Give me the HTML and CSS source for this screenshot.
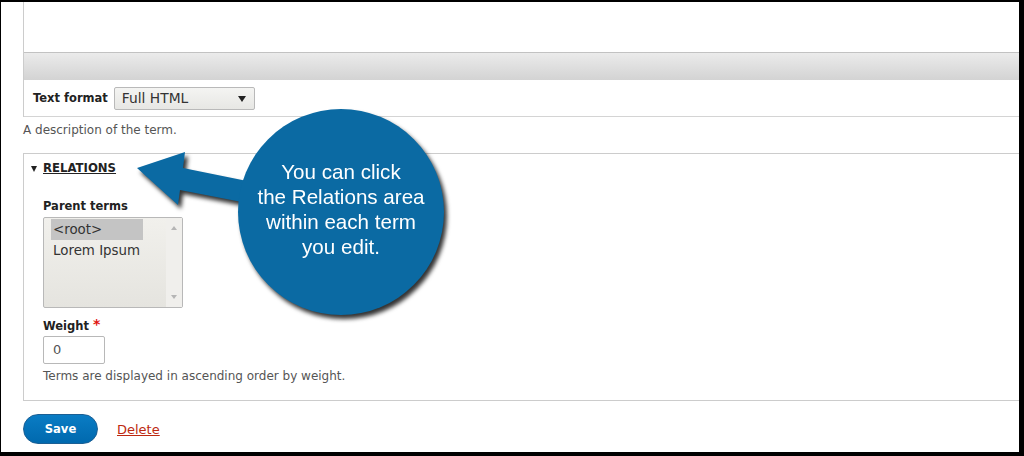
FILE: index.html
```html
<!DOCTYPE html>
<html lang="en">
<head>
    <meta charset="UTF-8">
    <title>Edit term</title>
    <link rel="stylesheet" href="styles.css">
</head>
<body>
    <div class="screen">
        <div class="editor">
            <div class="editor-body"></div>
            <div class="editor-toolbar"></div>
            <div class="format-row">
                <span class="label">Text format</span>
                <div class="select">Full HTML<span class="caret"></span></div>
            </div>
        </div>
        <p class="desc desc-term">A description of the term.</p>

        <div class="fieldset">
            <div class="legend"><span class="toggle"></span><a href="#">RELATIONS</a></div>
            <div class="fieldset-body">
                <div class="label label-parent">Parent terms</div>
                <div class="listbox">
                    <div class="options">
                        <div class="option selected">&lt;root&gt;</div>
                        <div class="option">Lorem Ipsum</div>
                    </div>
                    <div class="scrollbar">
                        <span class="arrow-up"></span>
                        <span class="arrow-down"></span>
                    </div>
                </div>
                <div class="label label-weight">Weight <span class="req">*</span></div>
                <div class="input">0</div>
                <p class="desc desc-weight">Terms are displayed in ascending order by weight.</p>
            </div>
        </div>

        <div class="actions">
            <a href="#" class="button">Save</a>
            <a href="#" class="delete">Delete</a>
        </div>

        <!-- callout overlay -->
        <div class="callout">
            <svg class="callout-arrow" width="130" height="70" viewBox="130 145 130 70">
                <polygon points="137,168 185,152 183,168 252,182 252,204 180,190 178,205"></polygon>
            </svg>
            <div class="callout-bubble">
                <span>You can click</span>
                <span>the Relations area</span>
                <span>within each term</span>
                <span>you edit.</span>
            </div>
        </div>
    </div>
</body>
</html>
```

FILE: styles.css
```css
* {
    box-sizing: border-box;
}
html, body {
    margin: 0;
    padding: 0;
}
body {
    background: #000;
    width: 1024px;
    height: 456px;
    overflow: hidden;
    font-family: 'DejaVu Sans', sans-serif;
    color: #333;
}
.screen {
    position: relative;
    margin: 2px 5px 0 1px;
    height: 450px;
    background: #fff;
    padding-left: 22px;
    overflow: hidden;
}
.editor {
    border-left: 1px solid #ccc;
}
.editor-body {
    height: 50px;
}
.editor-toolbar {
    height: 28px;
    border-top: 1px solid #c2c2c2;
    background: linear-gradient(to bottom, #ebebeb, #d3d3d3);
}
.format-row {
    height: 37px;
    border-bottom: 1px solid #d4d4d4;
    display: flex;
    align-items: center;
    padding-left: 9px;
}
.label {
    font-weight: bold;
    font-size: 11.5px;
    line-height: 16px;
    color: #222;
}
.format-row .label {
    margin-right: 6px;
}
.select {
    position: relative;
    width: 141px;
    height: 23px;
    margin-top: 1px;
    border: 1px solid #b9b9b9;
    border-radius: 2px;
    background: linear-gradient(to bottom, #f4f4f2, #e7e7e4);
    font-size: 13.8px;
    line-height: 21px;
    padding-left: 7px;
    color: #333;
}
.caret {
    position: absolute;
    right: 8px;
    top: 8px;
    border-top: 6px solid #222;
    border-left: 4px solid transparent;
    border-right: 4px solid transparent;
}
.desc {
    margin: 0;
    font-size: 12px;
    line-height: 16px;
    color: #555;
}
.desc-term {
    margin-top: 5px;
}
.fieldset {
    margin-top: 15px;
    border: 1px solid #ccc;
    border-right: none;
    height: 248px;
    padding: 6px 0 0 7px;
}
.legend {
    display: flex;
    align-items: center;
    height: 16px;
}
.toggle {
    border-top: 6px solid #222;
    border-left: 3.5px solid transparent;
    border-right: 3.5px solid transparent;
    margin-right: 6px;
    margin-top: 1px;
}
.legend a {
    font-weight: bold;
    font-size: 11.7px;
    color: #222;
    text-decoration: underline;
}
.fieldset-body {
    padding-left: 12px;
}
.label-parent {
    margin-top: 22px;
}
.listbox {
    margin-top: 3px;
    width: 140px;
    height: 91px;
    border: 1px solid #b8b8b8;
    border-radius: 2px;
    display: flex;
    background: linear-gradient(to bottom, #f1f0ec, #e5e4df);
}
.options {
    flex: 1;
    padding: 1px 0 0 7px;
}
.option {
    width: 92px;
    height: 21px;
    padding-left: 2px;
    font-size: 13.4px;
    line-height: 21px;
    color: #333;
}
.option.selected {
    background: #c4c4c4;
}
.scrollbar {
    width: 16px;
    background: #f0efec;
    display: flex;
    flex-direction: column;
    justify-content: space-between;
    align-items: center;
    padding: 8px 0 8px;
}
.arrow-up {
    border-bottom: 4px solid #b5b5b5;
    border-left: 3px solid transparent;
    border-right: 3px solid transparent;
}
.arrow-down {
    border-top: 4px solid #b5b5b5;
    border-left: 3px solid transparent;
    border-right: 3px solid transparent;
}
.label-weight {
    margin-top: 10px;
}
.req {
    color: #e1140f;
    font-size: 14px;
    vertical-align: top;
    line-height: 12px;
}
.input {
    margin-top: 2px;
    width: 62px;
    height: 28px;
    border: 1px solid #b8b8b8;
    border-radius: 2px;
    padding-left: 9px;
    font-size: 13px;
    line-height: 26px;
    color: #555;
}
.desc-weight {
    margin-top: 4px;
}
.actions {
    margin-top: 13px;
    display: flex;
    align-items: center;
}
.button {
    display: inline-block;
    width: 75px;
    height: 30px;
    border: 1px solid #1b5f94;
    border-radius: 20px;
    background: linear-gradient(to bottom, #0a7cc4, #0069ae);
    color: #fff;
    font-weight: bold;
    font-size: 11.6px;
    line-height: 28px;
    text-align: center;
    text-decoration: none;
}
.delete {
    margin-left: 19px;
    font-size: 13px;
    color: #bd2a10;
    text-decoration: underline;
}
.callout {
    position: absolute;
    left: 0;
    top: 0;
    filter: drop-shadow(3px 4px 2px rgba(0, 0, 0, 0.8));
}
.callout-arrow {
    position: absolute;
    left: 129px;
    top: 143px;
}
.callout-arrow polygon {
    fill: #0b6aa3;
}
.callout-bubble {
    position: absolute;
    left: 237px;
    top: 107px;
    width: 206px;
    height: 206px;
    border-radius: 50%;
    background: #0b6aa3;
    display: flex;
    flex-direction: column;
    align-items: center;
    justify-content: center;
    padding-bottom: 6px;
    font-family: 'Liberation Sans', Arial, sans-serif;
    font-size: 20.6px;
    line-height: 25px;
    color: #fff;
}
```
